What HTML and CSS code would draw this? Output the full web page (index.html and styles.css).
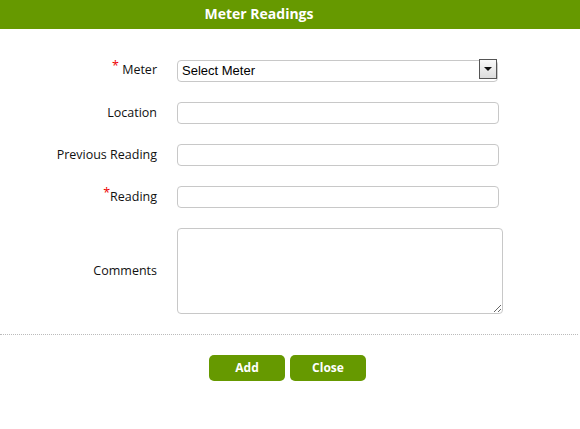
FILE: index.html
```html
<!DOCTYPE html>
<html lang="en">
<head>
    <meta charset="UTF-8">
    <title>Meter Readings</title>
    <link rel="stylesheet" href="styles.css">
</head>
<body>
    <header class="title-bar">
        <h1>Meter Readings</h1>
    </header>
    <form class="reading-form">
        <div class="row">
            <label for="meter"><span class="req">*</span> Meter</label>
            <div class="select-wrap">
                <select id="meter">
                    <option>Select Meter</option>
                </select>
                <span class="arrow"></span>
            </div>
        </div>
        <div class="row">
            <label for="location">Location</label>
            <input type="text" id="location">
        </div>
        <div class="row">
            <label for="previous">Previous Reading</label>
            <input type="text" id="previous">
        </div>
        <div class="row">
            <label for="reading"><span class="req">*</span>Reading</label>
            <input type="text" id="reading">
        </div>
        <div class="row">
            <label for="comments">Comments</label>
            <textarea id="comments"></textarea>
        </div>
    </form>
    <div class="actions">
        <button type="button">Add</button>
        <button type="button">Close</button>
    </div>
</body>
</html>
```

FILE: styles.css
```css
body {
    margin: 0;
    padding: 0;
    background: #fff;
    font-family: "Open Sans", Arial, sans-serif;
    color: #111;
}

.title-bar {
    background: #669900;
    height: 29px;
    padding-right: 62px;
    text-align: center;
}

.title-bar h1 {
    margin: 0;
    color: #fff;
    font-size: 14px;
    line-height: 27px;
    font-weight: bold;
}

.reading-form {
    display: flex;
    flex-direction: column;
    gap: 20px;
    padding: 29px 0 20px;
    border-bottom: 1px dotted #bbb;
    margin-right: 2px;
}

.row {
    display: flex;
    align-items: center;
}

.row label {
    flex: none;
    width: 177px;
    text-align: right;
    padding-right: 20px;
    font-size: 12.5px;
    box-sizing: border-box;
}

.req {
    color: #e00;
    position: relative;
    top: -4px;
}

.row input,
.row textarea,
.select-wrap select {
    box-sizing: border-box;
    border: 1px solid #c8c8c8;
    border-radius: 4px;
    background: #fff;
    margin: 0;
}

.row input {
    width: 322px;
    height: 22px;
}

.row textarea {
    width: 326px;
    height: 86px;
    resize: vertical;
}

.select-wrap {
    position: relative;
}

.select-wrap select {
    appearance: none;
    -webkit-appearance: none;
    width: 321px;
    height: 22px;
    padding: 0 0 0 4px;
    font-family: "Liberation Sans", Arial, sans-serif;
    font-size: 13px;
    color: #000;
}

.arrow {
    position: absolute;
    top: 1px;
    right: 1px;
    width: 16px;
    height: 18px;
    border: 1px solid #555;
    background: linear-gradient(#fafafa, #dcdcdc);
    pointer-events: none;
}

.arrow::after {
    content: "";
    position: absolute;
    left: 4px;
    top: 7px;
    border-left: 4px solid transparent;
    border-right: 4px solid transparent;
    border-top: 4px solid #111;
}

.actions {
    display: flex;
    justify-content: center;
    gap: 5px;
    padding: 20px 0;
    margin-left: -5px;
}

.actions button {
    width: 76px;
    height: 26px;
    border: none;
    border-radius: 5px;
    background: #669900;
    color: #fff;
    font-family: "Open Sans", Arial, sans-serif;
    font-weight: bold;
    font-size: 12px;
}
```
